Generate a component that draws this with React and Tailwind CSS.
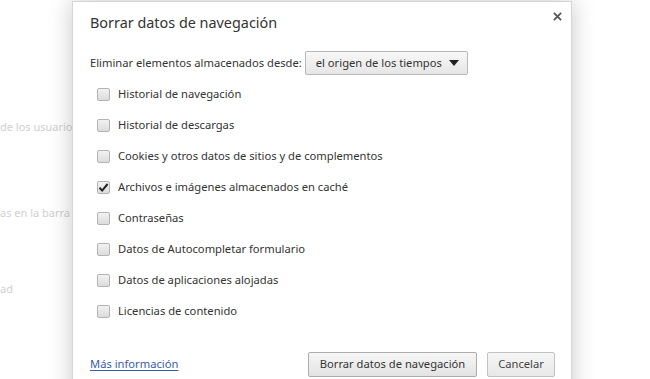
import React from "react";

const items = [
  ["Historial de navegación", false],
  ["Historial de descargas", false],
  ["Cookies y otros datos de sitios y de complementos", false],
  ["Archivos e imágenes almacenados en caché", true],
  ["Contraseñas", false],
  ["Datos de Autocompletar formulario", false],
  ["Datos de aplicaciones alojadas", false],
  ["Licencias de contenido", false],
];

function Checkbox({ checked }) {
  return (
    <span className="relative w-[13px] h-[13px] shrink-0 rounded-[2px] border border-[#b3b3b3] bg-gradient-to-b from-[#f2f2f2] to-[#dcdcdc]">
      {checked && (
        <svg viewBox="0 0 13 13" className="absolute left-[-1px] top-[-1px] w-[13px] h-[13px]">
          <path d="M2.5 6.8 L5.2 9.6 L10.6 3" fill="none" stroke="#222" strokeWidth="2" />
        </svg>
      )}
    </span>
  );
}

export default function App() {
  return (
    <div
      className="relative w-[650px] h-[379px] overflow-hidden bg-white"
      style={{ fontFamily: '"Noto Sans", "Open Sans", sans-serif' }}
    >
      <div className="flex flex-col text-[11px] text-[#d0d0d0] pt-[119px] whitespace-nowrap">
        <div className="h-[20px]">de los usuarios</div>
        <div className="h-[20px] mt-[66px]">as en la barra</div>
        <div className="h-[20px] mt-[56px]">ad</div>
      </div>

      <div className="absolute left-[72px] top-[1px] w-[500px] h-[420px] bg-white border border-[#d6d6d6] shadow-[0_0_22px_rgba(0,0,0,0.22)] text-[#333]">
        <div className="flex items-start justify-between pl-[17px] pr-[9px] pt-[11px]">
          <div className="text-[14.4px] leading-[20px] text-[#333] whitespace-nowrap">Borrar datos de navegación</div>
          <svg viewBox="0 0 10 10" className="w-[9px] h-[9px] -mt-[1px]">
            <path d="M1 1 L9 9 M9 1 L1 9" stroke="#555" strokeWidth="2" />
          </svg>
        </div>

        <div className="flex items-center pl-[17px] mt-[18px] text-[11.2px] whitespace-nowrap">
          <span>Eliminar elementos almacenados desde:</span>
          <div className="ml-[3px] h-[24px] w-[163px] flex items-center justify-between pl-[10px] pr-[8px] rounded-[2px] border border-[#b8b8b8] bg-gradient-to-b from-[#f8f8f8] to-[#e6e6e6]">
            <span>el origen de los tiempos</span>
            <svg viewBox="0 0 10 6" className="w-[10px] h-[6px]">
              <path d="M0 0 L10 0 L5 6 Z" fill="#222" />
            </svg>
          </div>
        </div>

        <div className="flex flex-col pl-[24px] mt-[4px] text-[11.2px] whitespace-nowrap">
          {items.map(([label, checked]) => (
            <div key={label} className="flex items-center h-[31px] gap-[8px]">
              <Checkbox checked={checked} />
              <span>{label}</span>
            </div>
          ))}
        </div>

        <div className="flex items-center justify-between pl-[17px] pr-[16px] mt-[25px] text-[11.2px] whitespace-nowrap">
          <a className="text-[#3b5eab] underline underline-offset-2">Más información</a>
          <div className="flex gap-[10px]">
            <button className="h-[25px] w-[169px] rounded-[2px] border border-[#acacac] bg-gradient-to-b from-[#f6f6f6] to-[#e3e3e3] text-[#333]">
              Borrar datos de navegación
            </button>
            <button className="h-[25px] w-[68px] rounded-[2px] border border-[#c2c2c2] bg-gradient-to-b from-[#f6f6f6] to-[#e8e8e8] text-[#444]">
              Cancelar
            </button>
          </div>
        </div>
      </div>
    </div>
  );
}
